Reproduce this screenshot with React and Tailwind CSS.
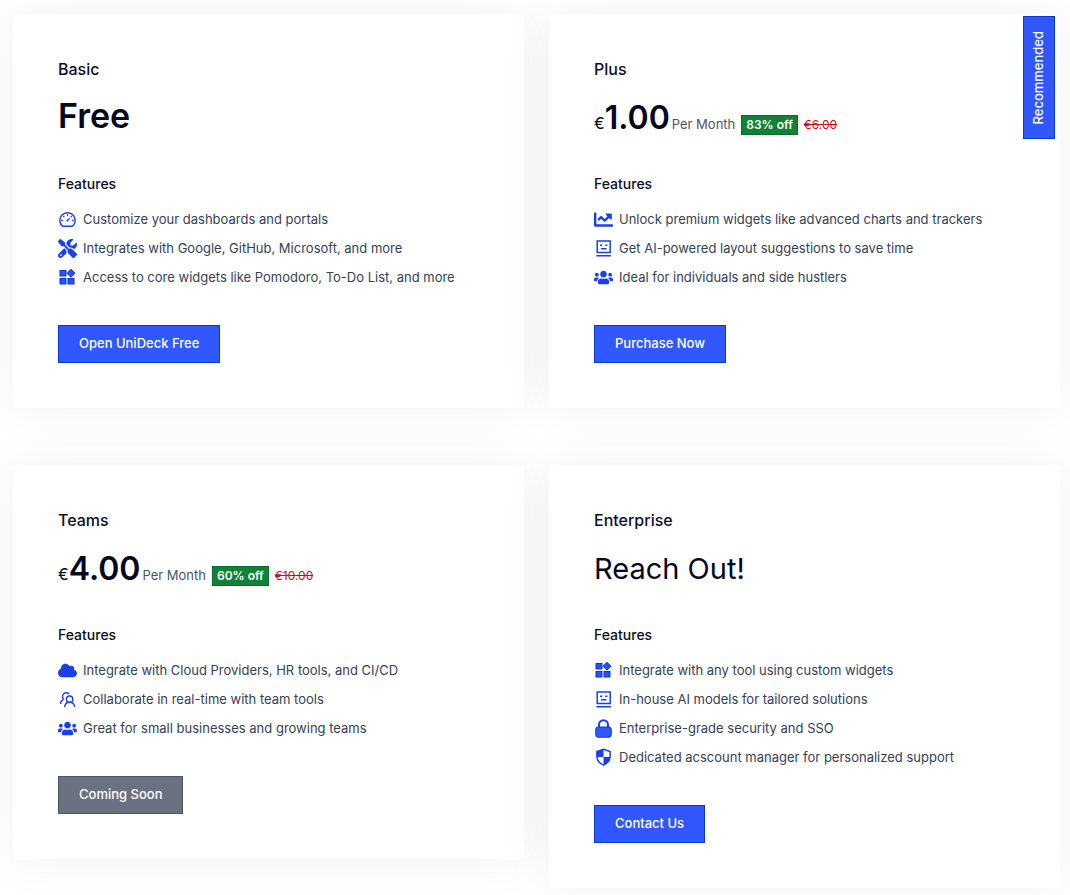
import React from 'react';
import { AiOutlineDashboard } from 'react-icons/ai';
import { FaCloud, FaUsers, FaChartLine } from 'react-icons/fa';
import { FaScrewdriverWrench } from 'react-icons/fa6';

const WidgetsIcon = () => (
  <svg viewBox="0 0 19 19" className="size-[19px] shrink-0" fill="#2a50fa" stroke="#0a35d0" strokeWidth="1">
    <rect x="2" y="2.500" width="6" height="5.500" />
    <rect x="2" y="10.500" width="6" height="5.500" />
    <rect x="10" y="10.500" width="6" height="5.500" />
    <path d="M13 1.200l4 4-4 4-4-4z" />
  </svg>
);

const BotIcon = () => (
  <svg viewBox="0 0 19 19" className="size-[19px] shrink-0" fill="none" stroke="#1a41e6" strokeWidth="1.500">
    <path d="M3.200 2h13v11.500h-13zM2.400 16.800h14.600" />
    <path d="M7 9.700h5.500M6 6.200h2.200M11.200 6.200h2.200" />
  </svg>
);

const PeopleIcon = () => (
  <svg viewBox="0 0 19 19" className="size-[19px] shrink-0" fill="none" stroke="#1a41e6" strokeWidth="1.400">
    <circle cx="11.600" cy="9.200" r="3.200" />
    <path d="M6.500 17c.5-3 2.500-4.700 5.100-4.700s4.600 1.700 5.100 4.700" />
    <path d="M5.600 9.300A3.400 3.400 0 1 1 11.200 3.900M2.400 13.800c.3-2.200 1.400-3.800 3.200-4.500" />
  </svg>
);

const LockIcon = () => (
  <svg viewBox="0 0 19 19" className="size-[19px] shrink-0">
    <path d="M5 8.500V5.700a4.500 4.500 0 0 1 9 0v2.800" fill="none" stroke="#1a41e6" strokeWidth="2" />
    <rect x="1.800" y="8" width="15.400" height="10.200" rx="2" fill="#3158ff" stroke="#0a35d0" strokeWidth="1" />
  </svg>
);

const ShieldIcon = () => (
  <svg viewBox="0 0 19 19" className="size-[19px] shrink-0">
    <path d="M9.500 1.200l6.600 2.400v4.700c0 4.200-2.700 7-6.600 8.800-3.900-1.800-6.600-4.600-6.600-8.800V3.600z" fill="#fff" stroke="#1a41e6" strokeWidth="1.500" />
    <path d="M9.500 1.200v7.700H2.900V3.600zM9.500 8.900h6.600c-.2 3.800-2.900 6.500-6.600 8.200z" fill="#1a41e6" />
  </svg>
);

const solid = 'size-[19px] shrink-0 text-[#1a41e6]';
const icons = {
  gauge: <AiOutlineDashboard className={solid} />,
  tools: <FaScrewdriverWrench className={solid} />,
  widgets: <WidgetsIcon />,
  chart: <FaChartLine className={solid} />,
  bot: <BotIcon />,
  users: <FaUsers className={solid} />,
  cloud: <FaCloud className={solid} />,
  people: <PeopleIcon />,
  lock: <LockIcon />,
  shield: <ShieldIcon />,
};

const plans = [
  {
    name: 'Basic',
    headline: 'Free',
    headlineStyle: 'text-[34px] leading-10 font-semibold',
    action: 'Open UniDeck Free',
    features: [
      ['gauge', 'Customize your dashboards and portals'],
      ['tools', 'Integrates with Google, GitHub, Microsoft, and more'],
      ['widgets', 'Access to core widgets like Pomodoro, To-Do List, and more'],
    ],
  },
  {
    name: 'Plus',
    price: '1.00',
    discount: '83% off',
    oldPrice: '€6.00',
    recommended: true,
    action: 'Purchase Now',
    features: [
      ['chart', 'Unlock premium widgets like advanced charts and trackers'],
      ['bot', 'Get AI-powered layout suggestions to save time'],
      ['users', 'Ideal for individuals and side hustlers'],
    ],
  },
  {
    name: 'Teams',
    price: '4.00',
    discount: '60% off',
    oldPrice: '€10.00',
    action: 'Coming Soon',
    disabled: true,
    features: [
      ['cloud', 'Integrate with Cloud Providers, HR tools, and CI/CD'],
      ['people', 'Collaborate in real-time with team tools'],
      ['users', 'Great for small businesses and growing teams'],
    ],
  },
  {
    name: 'Enterprise',
    headline: 'Reach Out!',
    headlineStyle: 'text-[29px] leading-11 font-normal',
    action: 'Contact Us',
    features: [
      ['widgets', 'Integrate with any tool using custom widgets'],
      ['bot', 'In-house AI models for tailored solutions'],
      ['lock', 'Enterprise-grade security and SSO'],
      ['shield', 'Dedicated acscount manager for personalized support'],
    ],
  },
];

const PlanPrice = ({ plan }) => (
  <p className="flex h-10 items-baseline leading-11">
    <span className="text-base leading-11 text-[#030720]">€</span>
    <span className="text-[32px] leading-11 font-semibold text-[#030720]">{plan.price}</span>
    <span className="ml-0.5 text-[13px] text-[#4a5565]">Per Month</span>
    <span className="ml-1.5 border border-[#0b6b2a] bg-[#108235] px-1 text-xs leading-[18px] font-semibold text-white">{plan.discount}</span>
    <del className="ml-1.5 text-xs text-[#d00a1c]">{plan.oldPrice}</del>
  </p>
);

const PlanCard = ({ plan }) => (
  <section className="relative bg-white px-[45px] pt-11 pb-[45px] shadow-[0_0_50px_rgba(0,0,0,0.06)]">
    {plan.recommended && (
      <div className="absolute top-0.5 right-[5px] flex h-[123px] w-8 items-center justify-center border border-[#0a35d0] bg-[#3158ff] text-[13px] font-medium text-white">
        <span className="rotate-180 [writing-mode:vertical-rl]">Recommended</span>
      </div>
    )}
    <h2 className="mb-4 text-base leading-[22px] font-medium text-[#0b0f24]">{plan.name}</h2>
    {plan.price ? <PlanPrice plan={plan} /> : <p className={`h-10 text-[#030720] ${plan.headlineStyle}`}>{plan.headline}</p>}
    <h3 className="mt-9 mb-[13px] text-sm leading-6 font-medium text-[#0b0f24]">Features</h3>
    <ul className="mb-[38px] space-y-[9px]">
      {plan.features.map(([icon, text]) => (
        <li key={text} className="flex items-center gap-1.5 text-[13px] leading-5 text-[#364153]">
          {icons[icon]}
          {text}
        </li>
      ))}
    </ul>
    <button
      type="button"
      disabled={plan.disabled}
      className={`block h-[38px] border px-5 text-[13px] font-medium text-white ${plan.disabled ? 'border-[#4a5565] bg-[#6a7282]' : 'border-[#0a35d0] bg-[#3158ff]'}`}
    >
      {plan.action}
    </button>
  </section>
);

export default function App() {
  return (
    <main className="grid grid-cols-2 items-start gap-x-[25px] gap-y-[57px] overflow-hidden bg-white pt-3.5 pr-2.5 pb-2 pl-[13px] font-['Inter',sans-serif]">
      {plans.map((plan) => (
        <PlanCard key={plan.name} plan={plan} />
      ))}
    </main>
  );
}
